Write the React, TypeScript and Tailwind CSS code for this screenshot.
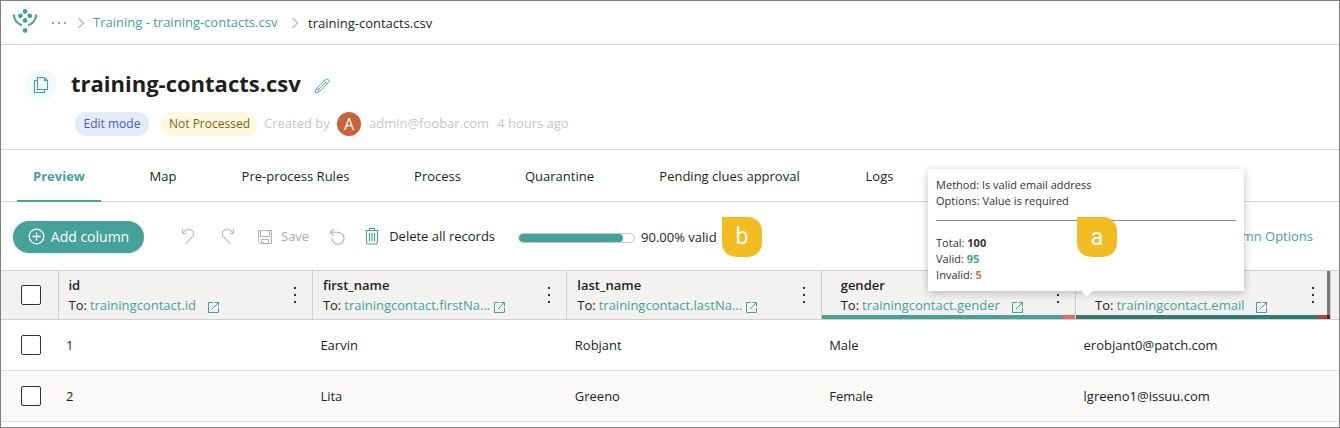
import React from "react";

type IconProps = { className?: string };

function Logo() {
  return (
    <svg width="26" height="26" viewBox="0 0 26 26" fill="#45a299" aria-hidden="true">
      <circle cx="13" cy="3.500" r="2.400" />
      <circle cx="8.400" cy="7.800" r="2.400" />
      <circle cx="17.800" cy="7.800" r="2.400" />
      <circle cx="13" cy="12.400" r="2.400" />
      <circle cx="13" cy="22.400" r="2.400" />
      <path d="M1.800 6.500c.3 5.400 3.200 9 8 10.800" fill="none" stroke="#45a299" strokeWidth="2.100" />
      <path d="M24.200 6.500c-.3 5.400-3.200 9-8 10.800" fill="none" stroke="#45a299" strokeWidth="2.100" />
    </svg>
  );
}

function Chevron({ className }: IconProps) {
  return (
    <svg className={className} width="8" height="12" viewBox="0 0 8 12" fill="none" stroke="#b5b3b1" strokeWidth="1.200" aria-hidden="true">
      <path d="M1.500 1l5 5-5 5" />
    </svg>
  );
}

function PagesIcon() {
  return (
    <svg width="16" height="18" viewBox="0 0 16 18" fill="none" stroke="#45a299" strokeWidth="1.100" aria-hidden="true">
      <path d="M4.500 1.500h7l3 3v9h-10zM11.500 1.500v3h3M4.500 4.500h-3v12h10v-3" />
    </svg>
  );
}

function PencilIcon() {
  return (
    <svg width="16" height="16" viewBox="0 0 16 16" fill="none" stroke="#45a299" aria-hidden="true">
      <path d="M1 15l1.200-4.300L11.300 1.600a1.900 1.900 0 0 1 3.100 3.100L5.300 13.800zM2.200 10.700c1.600.1 2.900 1.400 3.100 3.100M10 2.900L13.100 6M4.100 12l7.300-7.300" strokeWidth=".9" />
    </svg>
  );
}

function UndoIcon() {
  return (
    <svg width="14" height="17" viewBox="0 0 14 17" fill="none" stroke="#c2c0be" strokeWidth="1.100" aria-hidden="true">
      <path d="M1.500 1v4.500H6M1.500 5.500C4 1.300 8.400.3 11 2.500c2.200 1.900 2.100 4.600.3 6.500L4.200 16.200" />
    </svg>
  );
}

function RedoIcon() {
  return (
    <svg width="14" height="17" viewBox="0 0 14 17" fill="none" stroke="#c2c0be" strokeWidth="1.100" aria-hidden="true">
      <path d="M12.500 1v4.500H8M12.500 5.500C10 1.300 5.600.3 3 2.500.8 4.400.9 7.100 2.700 9l7.100 7.200" />
    </svg>
  );
}

function SaveIcon() {
  return (
    <svg width="16" height="16" viewBox="0 0 16 16" fill="none" stroke="#b3b1af" aria-hidden="true">
      <path d="M1.500 1.500h13v13h-11l-2-2zM3.500 1.500v6h9v-6M4.500 14.500v-4h7v4M6.500 14.500v-2" />
    </svg>
  );
}

function ResetIcon() {
  return (
    <svg width="16" height="17" viewBox="0 0 16 17" fill="none" stroke="#b3b1af" strokeWidth="1.100" aria-hidden="true">
      <path d="M5 .8L1.200 4.300 5 7.800M1.500 4.300H9a6 6 0 1 1-6 6" />
    </svg>
  );
}

function TrashIcon() {
  return (
    <svg width="14" height="17" viewBox="0 0 14 17" fill="none" stroke="#45a299" strokeWidth="1.100" aria-hidden="true">
      <path d="M.5 2.500h13M4.500 2.500v-2h5v2M1.500 2.500v12a1.500 1.500 0 0 0 1.500 1.500h8a1.500 1.500 0 0 0 1.500-1.500v-12M4.500 5v8.500M7 5v8.500M9.500 5v8.500" />
    </svg>
  );
}

function PlusCircleIcon() {
  return (
    <svg width="17" height="17" viewBox="0 0 17 17" fill="none" stroke="#fff" strokeWidth="1.300" aria-hidden="true">
      <circle cx="8.500" cy="8.500" r="7.300" />
      <path d="M8.500 4.500v8M4.500 8.500h8" />
    </svg>
  );
}

function OpenIcon() {
  return (
    <svg width="11" height="11" viewBox="0 0 11 11" fill="none" stroke="#45a299" aria-hidden="true">
      <path d="M5 .5H.5v10h10V6M6.500.5h4v4M10.300.7L4 7" />
    </svg>
  );
}

function Callout({ children }: { children: string }) {
  return (
    <span className="flex size-10 items-center justify-center rounded-[14px] rounded-tl-none bg-[#f4bc23] pt-0.5 font-['Roboto',sans-serif] text-[23px] text-white">
      {children}
    </span>
  );
}

function Checkbox({ label }: { label: string }) {
  return (
    <input
      type="checkbox"
      aria-label={label}
      className="ml-5 block size-5 appearance-none rounded-xs border border-[#323130] bg-white checked:bg-[#45a299]"
    />
  );
}

const tabs = [
  { name: "Preview", width: "w-[84px]" },
  { name: "Map", width: "w-[60px]" },
  { name: "Pre-process Rules", width: "w-[141px]" },
  { name: "Process", width: "w-[79px]" },
  { name: "Quarantine", width: "w-[101px]" },
  { name: "Pending clues approval", width: "w-[175px]" },
  { name: "Logs", width: "w-[61px]" },
];

type Column = { name: string; target: string; quality?: "normal" | "hovered" };

const columns: Column[] = [
  { name: "id", target: "trainingcontact.id" },
  { name: "first_name", target: "trainingcontact.firstName" },
  { name: "last_name", target: "trainingcontact.lastName" },
  { name: "gender", target: "trainingcontact.gender", quality: "normal" },
  { name: "email", target: "trainingcontact.email", quality: "hovered" },
];

const rows = [
  ["1", "Earvin", "Robjant", "Male", "erobjant0@patch.com"],
  ["2", "Lita", "Greeno", "Female", "lgreeno1@issuu.com"],
];

const isLong = (target: string) => target.length > 22;
const shorten = (target: string) => (isLong(target) ? `${target.slice(0, -2)}...` : target);

function QualityTooltip() {
  return (
    <div
      role="tooltip"
      className="absolute bottom-7 -left-[148px] z-10 w-[316px] bg-white p-2 text-[11px] leading-4 font-normal text-[#323130] shadow-[0_2px_8px_rgba(0,0,0,0.25)]"
    >
      <p>Method: Is valid email address</p>
      <p>Options: Value is required</p>
      <hr className="mt-[11px] mb-[14px] border-t border-[#8f8f8f]" />
      <p>Total: <b>100</b></p>
      <p>Valid: <b className="text-[#45a299]">95</b></p>
      <p>Invalid: <b className="text-[#e06c68]">5</b></p>
      <span className="absolute -bottom-1 left-[155px] size-2 rotate-45 bg-white" />
      <div className="absolute top-12 left-[149px]">
        <Callout>a</Callout>
      </div>
    </div>
  );
}

function HeaderCell({ column }: { column: Column }) {
  const hovered = column.quality === "hovered";
  return (
    <th className="relative border-r border-[#d0d0d0] p-0 text-left align-top">
      <div className={`flex pt-1 pr-[9px] ${column.quality ? "pl-[19px]" : "pl-[10px]"}`}>
        <div className="min-w-0 flex-1 whitespace-nowrap">
          <div className="text-[13px] leading-5 font-semibold">{column.name}</div>
          <div className="flex items-center text-[13px] leading-5 font-normal">
            <span className="mr-[3px]">To:</span>
            <a href="#target" title={column.target} className="text-[#45a299]">{shorten(column.target)}</a>
            <a href="#open" aria-label={`Open ${column.target}`} className={`pt-1 ${isLong(column.target) ? "ml-1" : "ml-3"}`}>
              <OpenIcon />
            </a>
          </div>
        </div>
        <button aria-label={`${column.name} menu`} className="flex h-10 w-4 shrink-0 flex-col items-center justify-center gap-[5px]">
          <span className="size-0.5 bg-[#323130]" />
          <span className="size-0.5 bg-[#323130]" />
          <span className="size-0.5 bg-[#323130]" />
        </button>
      </div>
      {column.quality && (
        <div className="absolute inset-x-0 bottom-0 flex h-1">
          <span className={`w-[95%] ${hovered ? "bg-[#307c75]" : "bg-[#45a299]"}`} />
          <span className={`flex-1 ${hovered ? "bg-[#a04a39]" : "bg-[#e06c68]"}`} />
        </div>
      )}
      {hovered && <span className="absolute inset-y-0 right-0 w-[3px] bg-black/50" />}
      {hovered && <QualityTooltip />}
    </th>
  );
}

export default function App() {
  return (
    <div className="overflow-hidden border border-[#7f7f7f] bg-white pb-[5px] font-['Open_Sans','Noto_Sans',sans-serif] text-[13px] text-[#201f1e]">
      <nav aria-label="Breadcrumb" className="flex h-11 items-center border-b border-[#d6d6d6] pl-[11px]">
        <a href="#home" aria-label="Home" className="pb-1">
          <Logo />
        </a>
        <button aria-label="More" className="ml-[14px] flex gap-1">
          <span className="size-0.5 bg-[#a19f9d]" />
          <span className="size-0.5 bg-[#a19f9d]" />
          <span className="size-0.5 bg-[#a19f9d]" />
        </button>
        <Chevron className="ml-[11px]" />
        <a href="#training" className="ml-2 w-[190px] whitespace-nowrap text-[#45a299]">Training - training-contacts.csv</a>
        <Chevron className="ml-2" />
        <span className="ml-[9px] pt-0.5">training-contacts.csv</span>
      </nav>

      <header className="flex h-[105px] items-start border-b border-[#d6d6d6] pt-[22px] pl-6">
        <div className="mt-0.5 flex size-8 items-center justify-center rounded-full bg-[#f3fafa]">
          <PagesIcon />
        </div>
        <div className="ml-[14px]">
          <div className="flex h-8 items-center gap-2">
            <h1 className="w-[235px] text-[22px] leading-8 font-bold whitespace-nowrap">training-contacts.csv</h1>
            <button aria-label="Rename" className="pt-1.5">
              <PencilIcon />
            </button>
          </div>
          <div className="mt-3 ml-1 flex h-[26px] items-center whitespace-nowrap text-[#c8c6c4]">
            <span className="flex h-6 w-[74px] items-center justify-center rounded-full bg-[#e5ecf9] text-xs text-[#3f5fae]">Edit mode</span>
            <span className="ml-3 flex h-6 w-[97px] items-center justify-center rounded-full bg-[#fff7de] text-xs text-[#7d6212]">Not Processed</span>
            <span className="ml-1.5 w-[73px]">Created by</span>
            <span className="flex size-6 items-center justify-center rounded-full bg-[#ca6337] text-base text-white">A</span>
            <span className="ml-2">admin@foobar.com</span>
            <span className="ml-2">4 hours ago</span>
          </div>
        </div>
      </header>

      <div role="tablist" className="flex h-[52px] gap-8 border-b border-[#d6d6d6] pl-4">
        {tabs.map((tab, i) => (
          <button
            key={tab.name}
            role="tab"
            aria-selected={i === 0}
            className={`-mb-px border-b-2 pt-[3px] whitespace-nowrap ${tab.width} ${i === 0 ? "border-[#45a299] font-bold text-[#45a299]" : "border-transparent"}`}
          >
            {tab.name}
          </button>
        ))}
      </div>

      <div className="flex h-[68px] items-center pt-px pr-[26px] pl-3 whitespace-nowrap">
        <button className="flex h-8 w-[131px] items-center justify-center gap-1.5 rounded-full bg-[#45a299] text-sm text-white shadow-sm">
          <PlusCircleIcon />
          Add column
        </button>
        <button aria-label="Undo" className="ml-[37px]"><UndoIcon /></button>
        <button aria-label="Redo" className="ml-[26px]"><RedoIcon /></button>
        <button className="ml-[22px] flex items-center gap-2 text-[#a9a7a5]"><SaveIcon />Save</button>
        <button aria-label="Reset" className="ml-5"><ResetIcon /></button>
        <button className="ml-5 flex items-center gap-[10px]"><TrashIcon />Delete all records</button>
        <div role="progressbar" aria-label="Valid records" aria-valuenow={90} className="mt-0.5 ml-[23px] h-[10px] w-[117px] overflow-hidden rounded-full border border-[#c4c4c4]">
          <div className="h-full w-[90%] rounded-full bg-[#45a299]" />
        </div>
        <span className="mt-0.5 ml-1.5 w-[77px]">90.00% valid</span>
        <div className="ml-1"><Callout>b</Callout></div>
        <button className="ml-auto text-[#45a299]">Column Options</button>
      </div>

      <table className="w-full table-fixed border-collapse border-y border-[#d6d6d6] text-left">
        <colgroup>
          <col className="w-[57px]" />
          <col /><col /><col /><col /><col />
          <col className="w-[9px]" />
        </colgroup>
        <thead>
          <tr className="h-[49px] border-y border-[#d0d0d0] bg-[#f3f2f1]">
            <th className="border-r border-[#d0d0d0] p-0"><Checkbox label="Select all" /></th>
            {columns.map((column) => <HeaderCell key={column.name} column={column} />)}
            <th className="p-0" />
          </tr>
        </thead>
        <tbody>
          {rows.map((row) => (
            <tr key={row[0]} className="h-[51px] border-b border-[#dcdcdc] even:bg-[#faf9f8]">
              <td className="p-0"><Checkbox label={`Select row ${row[0]}`} /></td>
              {row.map((cell) => <td key={cell} className="p-0 pt-0.5 pl-2">{cell}</td>)}
              <td className="p-0" />
            </tr>
          ))}
        </tbody>
      </table>
    </div>
  );
}
